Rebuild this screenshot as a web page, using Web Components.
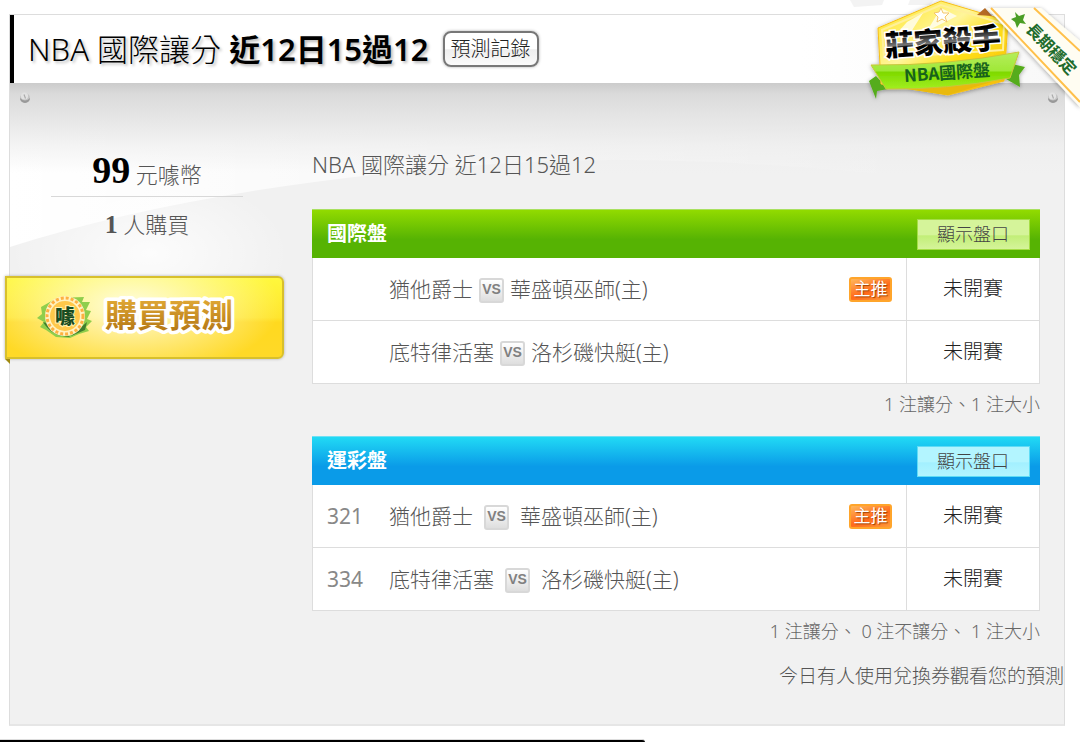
<!DOCTYPE html>
<html lang="zh-Hant">
<head>
<meta charset="utf-8">
<meta name="viewport" content="width=device-width, initial-scale=1">
<title>NBA 國際讓分</title>
<style>
body{margin:0;background:#fff;color:#555;font:300 20px/28px "Noto Sans","Noto Sans CJK TC",sans-serif;overflow-x:hidden}
</style>
</head>
<body>
<forecast-page></forecast-page>
<script>
const define=(name,html,setup)=>customElements.define(name,class extends HTMLElement{
  constructor(){
    super();
    const t=document.createElement('template');
    t.innerHTML=html;
    this.attachShadow({mode:'open'}).append(t.content.cloneNode(true));
  }
  connectedCallback(){ if(setup) setup(this,this.shadowRoot); }
});

define('vs-mark',`<style>
:host{display:inline-block;vertical-align:3px;box-sizing:border-box;width:25px;height:25px;border:2px solid #d8d8d8;border-radius:3px;background:linear-gradient(#fff,#dedede);color:#808080;font:700 14px/18px "Liberation Sans",sans-serif;text-align:center}
</style>VS`);

define('main-pick',`<style>
:host{display:block;box-sizing:border-box;width:43px;height:25px;margin-left:auto;border:2px solid #ffa52b;border-radius:3px;background:linear-gradient(160deg,#ffb85c,#ff6a1a 55%,#ff9a3a);color:#fff;font-size:17px;font-weight:400;line-height:20px;text-align:center;text-shadow:1px 1px 1px #a04000}
</style>主推`);

define('tack-pin',`<style>:host{display:block;width:12px;height:12px}svg{display:block}</style>
<svg width="12" height="12" viewBox="0 0 12 12" aria-hidden="true"><circle cx="6" cy="6" r="5" fill="#c4c4c4"/><path d="M1 6a5 5 0 0 0 10 0q-5 5-10 0" fill="#999"/><circle cx="5.500" cy="4" r="3.6" fill="#e2e2e2"/><path d="M5 2.500 6.500 6.500" stroke="#aaa" stroke-width="1.2"/></svg>`);

define('market-table',`<style>
:host{display:block;--top:#94dc00;--mid:#56b303;--line:#a9e060;--btn:#d5f49a;--btn2:#c2ee78;--btnline:#a5dd45;--gap:6px}
:host([tone=blue]){--top:#22dcf5;--mid:#0a9be8;--line:#6fe0f4;--btn:#b3f5ff;--btn2:#a3f0ff;--btnline:#5fdcf6;--gap:11px}
table{width:100%;border-spacing:0;table-layout:fixed;border-bottom:1px solid #ddd}
thead tr{background:linear-gradient(var(--top),var(--mid) 62%,var(--mid))}
th{height:48px;padding:0;text-align:left;color:#fff;font-weight:700;border-top:1px solid var(--line)}
th:first-child{padding-left:15px}
th:last-child{text-align:center}
td{box-sizing:border-box;height:63px;padding:0;border-bottom:1px solid #ddd;background:#fff}
tr:last-child td{height:62px;border-bottom:0}
.num{padding-left:14px;border-left:1px solid #ddd;font-size:21px;font-weight:400;color:#888}
.teams{font-size:21px;white-space:nowrap}
.pick{padding-right:14px}
.state{border-left:1px solid #ddd;border-right:1px solid #ddd;text-align:center;color:#222}
vs-mark{margin:0 var(--gap)}
.c1{width:77px}.c3{width:60px}.c4{width:134px}
button{box-sizing:border-box;width:113px;height:31px;margin:0;padding:0;border:1px solid var(--btnline);background:linear-gradient(var(--btn) 50%,var(--btn2) 55%,var(--btn));color:#444;font:300 18px/26px "Noto Sans","Noto Sans CJK TC",sans-serif;vertical-align:middle}
.sum{margin:0;padding-top:6px;text-align:right;font-size:18px;line-height:28px;color:#666;white-space:pre}
</style>
<table><colgroup><col class="c1"><col><col class="c3"><col class="c4"></colgroup>
<thead><tr><th colspan="3"></th><th><button type="button">顯示盤口</button></th></tr></thead><tbody></tbody></table>
<p class="sum"><slot></slot></p>`,(el,root)=>{
  root.querySelector('th').textContent=el.getAttribute('name');
  root.querySelector('tbody').innerHTML=el.getAttribute('games').split(';').map(g=>{
    const [n,a,b,p]=g.split(',');
    return `<tr><td class="num">${n}</td><td class="teams">${a}<vs-mark></vs-mark>${b}</td><td class="pick">${p?'<main-pick></main-pick>':''}</td><td class="state">未開賽</td></tr>`;
  }).join('');
});

define('buy-button',`<style>
:host{display:block;position:relative}
button{display:block;box-sizing:border-box;width:100%;height:83px;margin:0;padding:0 0 0 30px;border:2px solid #d8c02c;border-radius:0 6px 6px 0;text-align:left;
background:radial-gradient(ellipse 150px 70px at 45% 35%,#fffde0,#fff58000),linear-gradient(#fff83c,#ffe52e 50%,#ffd91f 56%,#ffd928);box-shadow:0 0 3px #aaa}
svg{display:block}
:host::after{content:"";position:absolute;left:0;top:100%;border-style:solid;border-width:0 5px 5px 0;border-color:transparent #a08a10 transparent transparent}
</style>
<button type="button"><svg width="205" height="60" viewBox="0 0 205 60">
<defs><linearGradient id="g" x1="0" y1="0" x2="0" y2="1"><stop offset="0" stop-color="#ecb63e"/><stop offset="1" stop-color="#ae7010"/></linearGradient></defs>
<path d="M4 19 20 10l27-1-2 5 8 0-4 8 5 1-4 8 5 2-6 6 3 4-10 3-9 4-14-1-10-7-6-3 4-5-7-4 5-4z" fill="#8fce4c"/>
<path d="M6 34q8 14 27 15l-10-10zM34 48l14-6 2-8z" fill="#3f7d2c"/>
<circle cx="28" cy="28" r="20" fill="#fff2c0"/><circle cx="28" cy="28" r="18" fill="none" stroke="#ffb040" stroke-width="3" stroke-dasharray="3 2"/><circle cx="28" cy="28" r="15" fill="#ffc84a"/>
<text x="28" y="36" text-anchor="middle" font-family="Noto Sans CJK TC,sans-serif" font-size="20" font-weight="900" fill="#174b22" stroke="#fff3b0" stroke-width="2" paint-order="stroke">噱</text>
<text x="68" y="39" font-family="Noto Sans CJK TC,sans-serif" font-size="32" font-weight="700" fill="url(#g)" stroke="#fff" stroke-width="7" stroke-linejoin="round" paint-order="stroke">購買預測</text>
</svg></button>`);

define('rank-badge',`<style>:host{display:block;pointer-events:none}svg{display:block}</style>
<svg width="240" height="120" viewBox="0 0 240 120">
<defs>
<linearGradient id="y" x1="0" y1="0" x2="1" y2="1"><stop offset="0" stop-color="#ffe41c"/><stop offset=".4" stop-color="#fff59a"/><stop offset=".6" stop-color="#ffe01a"/><stop offset="1" stop-color="#f5b500"/></linearGradient>
<linearGradient id="n" x1="0" y1="0" x2="0" y2="1"><stop offset="0" stop-color="#b5ee5c"/><stop offset=".5" stop-color="#a0e838"/><stop offset=".55" stop-color="#7fd900"/><stop offset="1" stop-color="#a2ef20"/></linearGradient>
<linearGradient id="k" x1="0" y1="0" x2="0" y2="1"><stop offset=".3" stop-color="#000"/><stop offset=".58" stop-color="#777"/><stop offset=".62" stop-color="#000"/></linearGradient>
<filter id="s" x="-20%" y="-20%" width="140%" height="140%"><feDropShadow dx="0" dy="1" stdDeviation="2" flood-opacity=".35"/></filter>
</defs>
<path d="M10 0h34l-2 5-28 2zM70 0h24l-4 5H68z" fill="#e8e8e8" opacity=".5"/>
<g filter="url(#s)">
<path d="M29 81 36 76l12 13-11 2-1 8zM172 64l13 3-6 8 1 12-14-8z" fill="#55ac1a"/>
<path d="M101 1 38 28l3 56 67 11 56-14 4-60z" fill="url(#y)" stroke="#f7bf18"/>
<path d="M60 88 108 95 152 82z" fill="#e9b90c"/>
<path d="M101 5 42 30l2 28 119-8 1-26z" fill="none" stroke="#fff09a" stroke-width="2"/>
<path d="M67 22 83 13 69 35 52 39zM101 8l16 8-30 15z" fill="#fff" opacity=".75"/>
<path d="m101 8 2 5 6 0-4 4 2 5-5-3-5 3 1-5-4-4 5-1z" fill="#fff" stroke="#f4c66b"/>
<path d="M31 65Q106 66 179 52l-9 26Q105 90 46 89z" fill="url(#n)" stroke="#c9c63a"/>
</g>
<g transform="rotate(-4 105 44)" font-family="Noto Sans CJK TC,sans-serif">
<text x="103" y="52" text-anchor="middle" font-size="29" font-weight="900" fill="url(#k)" stroke="#fff" stroke-width="3" paint-order="stroke">莊家殺手</text>
<text x="105" y="79" text-anchor="middle" font-size="17" font-weight="700" fill="#17621c">NBA國際盤</text></g>
<path d="m137 15 8-7 7 8z" fill="#b56a24"/>
<g filter="url(#s)"><path d="M147 8h54l39 33v66z" fill="#fffdf2"/></g>
<path d="m151 8 89 94M194 8l46 43" stroke="#ffc04a" stroke-width="2"/>
<path d="m175 12 4 4 6-2-2 6 3 4-6-1-3 5-2-6-4-3 5-2z" fill="#4b9e24"/>
<text transform="translate(185 30) rotate(46)" font-family="Noto Sans CJK TC,sans-serif" font-size="16" font-weight="700" fill="#206b2c">長期穩定</text>
</svg>`);

define('forecast-page',`<style>
:host{display:flex;flex-direction:column;position:relative;overflow:hidden;padding-top:14px}
.card{position:relative;margin:0 15px 0 9px;border:1px solid #ddd;border-bottom:2px solid #e6e6e6;background:#f1f1f1}
header{display:flex;align-items:center;gap:14px;height:68px;padding-left:14px;border-left:4px solid #000;background:linear-gradient(90deg,#fff 75%,#f8f8f8);color:#000}
h1{margin:0;font-size:31px;font-weight:300;line-height:40px;text-shadow:2px 2px 3px #bbb;white-space:nowrap}
h1 b{font-weight:600}
header button{box-sizing:border-box;height:36px;margin:0;padding:0 6px;border:2px solid #777;border-radius:8px;background:linear-gradient(#fff 50%,#eee 52%,#fafafa);box-shadow:0 0 3px #aaa;color:#222;font:300 20px/28px "Noto Sans","Noto Sans CJK TC",sans-serif}
.body{position:relative;padding:0 24px 34px 0}
.bg{position:absolute;inset:0 0 auto 0;width:100%;height:260px}
.shade{position:absolute;inset:0 0 auto 0;height:90px;background:linear-gradient(#cbcbcb,#dadada 12%,#e4e4e4 35%,#ededed99 70%,#f1f1f100)}
.pins{position:relative;display:flex;justify-content:space-between;padding:9px 0 0 9px;margin-right:-19px}
.cols{position:relative;display:grid;grid-template-columns:274px minmax(0,1fr);gap:28px;padding-top:44px}
aside p{margin:0 41px;text-align:center;font-size:22px;line-height:32px}
.price{border-bottom:1px solid #d8d8d8;padding:6px 0}
.price b{color:#000;font:700 38px/32px "Liberation Serif",serif}
.count{padding:11px 0 35px}
.count b{font:700 26px/32px "Liberation Serif",serif}
buy-button{margin-left:-5px}
h2{margin:0 0 29px;font-size:22px;font-weight:300;line-height:32px}
market-table+market-table{margin-top:18px}
.note{position:relative;margin:17px -24px 0 0;text-align:right;font-size:19px;line-height:28px}
rank-badge{position:absolute;top:0;right:0}
footer{width:645px;max-width:60%;height:2px;margin-top:13px;background:#000;border-top:1px solid #ddd;border-radius:0 3px 0 0}
</style>
<section class="card">
<header><h1>NBA 國際讓分 <b>近12日15過12</b></h1><button type="button">預測記錄</button></header>
<div class="body">
<svg class="bg" viewBox="0 0 1056 260" preserveAspectRatio="none" aria-hidden="true"><defs><linearGradient id="w" x1="0" y1="0" x2="1" y2="0"><stop offset="0" stop-color="#fff"/><stop offset=".5" stop-color="#fff" stop-opacity=".5"/><stop offset="1" stop-color="#fff" stop-opacity="0"/></linearGradient><radialGradient id="r"><stop offset="0" stop-color="#fff" stop-opacity=".8"/><stop offset="1" stop-color="#fff" stop-opacity="0"/></radialGradient></defs><path d="M0 0H900V94Q680 70 500 80 200 100 0 164z" fill="url(#w)"/><ellipse cx="140" cy="170" rx="140" ry="80" fill="url(#r)"/></svg>
<div class="shade"></div>
<div class="pins"><tack-pin></tack-pin><tack-pin></tack-pin></div>
<div class="cols">
<aside><p class="price"><b>99</b> 元噱幣</p><p class="count"><b>1</b> 人購買</p><buy-button></buy-button></aside>
<main><h2>NBA 國際讓分 近12日15過12</h2>
<market-table name="國際盤" games=",猶他爵士,華盛頓巫師(主),1;,底特律活塞,洛杉磯快艇(主),">1 注讓分、1 注大小</market-table>
<market-table tone="blue" name="運彩盤" games="321,猶他爵士,華盛頓巫師(主),1;334,底特律活塞,洛杉磯快艇(主),">1 注讓分、 0 注不讓分、 1 注大小</market-table>
</main></div>
<p class="note">今日有人使用兌換券觀看您的預測</p>
</div></section>
<footer></footer>
<rank-badge></rank-badge>`);
</script>
</body>
</html>
